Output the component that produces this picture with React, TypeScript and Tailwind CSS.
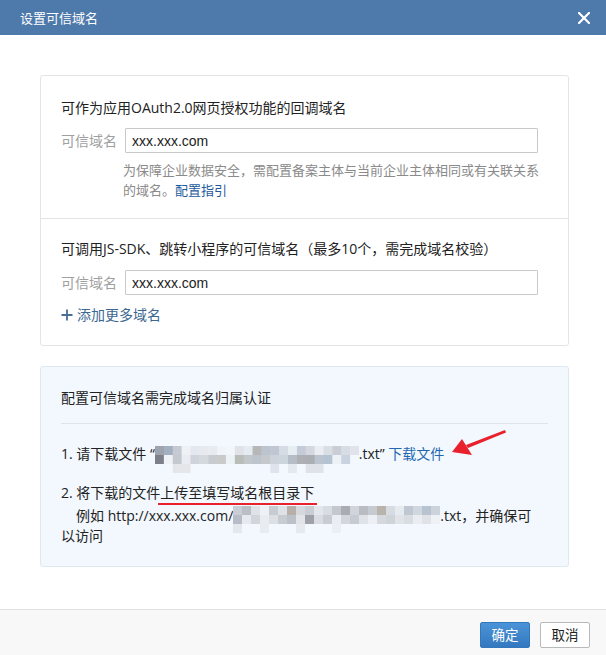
import React from "react";

const font = {
	fontFamily: '"Open Sans", "Noto Sans CJK SC", sans-serif',
};

const inputFont = {
	fontFamily: '"Liberation Sans", "Noto Sans CJK SC", sans-serif',
};

// pixelated (mosaic) patches that hide file names in the screenshot
const mosaicA: string[][] = [
	["#9ea3ad", "#a3b0bf", "#c5c9d1", "#eef2f7", "#e4e9ef", "#e6eaee", "#e8ecf0", "#f0f5fa", "#f2f7fc", "#dfe3e8", "#e5ebf0", "#b7b7ba", "#bcc4cf", "#c0c7d2", "#d6dce3", "#e6edf3", "#c3ccd8", "#d5d9df", "#eaeef2", "#d9dde4", "#cacdd4", "#d8dde3", "#e0e4ea"],
	["#7e8089", "#eff3f8", "#c4c8cf", "#e9edf2", "#cfd4da", "#d4d9de", "#c8ccd1", "#cacaca", "#edf2f7", "#babdb7", "#c2c7cc", "#bdc4cd", "#c6c9cb", "#ccd3db", "#ccd4dc", "#b7bdc6", "#aeb0b5", "#abaeb3", "#bcc4cf", "#b5c4d2", "#eef2f6", "#c8d3df", "#f2f8fe"],
	["#f2f8fe", "#f2f8fe", "#e4e6ea", "#e4e6ea", "#f2f8fe", "#f2f8fe", "#f2f8fe", "#f2f8fe", "#f2f8fe", "#f2f8fe", "#f2f8fe", "#f2f8fe", "#f2f8fe", "#dfe4ec", "#f2f8fe", "#e4e8ef", "#f2f8fe", "#dfe2e8", "#dfe2e8", "#f2f8fe", "#f2f8fe", "#f2f8fe", "#f2f8fe"],
];

const mosaicB: string[][] = [
	["#c9ced6", "#b9bec7", "#dfe3e8", "#eef2f6", "#c7ccd2", "#dde2e7", "#b8afa8", "#d5d9de", "#c9ced4", "#e3e7ec", "#d8dde3", "#c4c8ce", "#a9adb3", "#cfd5db", "#b9bdc2", "#c6cbd1", "#b8b3ab", "#d7dce2", "#e6ebf0", "#bfc8d2", "#d1d7de", "#b7c3d0", "#cdd3da"],
	["#b7bcc6", "#e6eaef", "#d2d6dc", "#e9edf1", "#dce0e5", "#c7ccd2", "#bcc1c7", "#e1e5ea", "#9ea2a8", "#d9dde3", "#c9cdd3", "#eaeef2", "#d3d7dc", "#c6cbd1", "#dfe3e8", "#ecf0f4", "#d5d9de", "#cfd4d9", "#e0e4e9", "#d8dde2", "#e9edf1", "#dfe3e8", "#eef2f6"],
	["#e4e8ed", "#f2f8fe", "#f2f8fe", "#e8ecf1", "#f2f8fe", "#f2f8fe", "#f2f8fe", "#e6e9ee", "#f2f8fe", "#f2f8fe", "#f2f8fe", "#ebeef2", "#f2f8fe", "#f2f8fe", "#f2f8fe", "#f2f8fe", "#f2f8fe", "#f2f8fe", "#f2f8fe", "#f2f8fe", "#f2f8fe", "#f2f8fe", "#f2f8fe"],
];

const Mosaic: React.FC<{ cells: string[][]; width: number; className?: string }> = ({
	cells,
	width,
	className,
}) => {
	const cols = cells[0].length;
	const w = width / cols;
	return (
		<svg
			width={width}
			height={cells.length * 9}
			className={className}
			viewBox={`0 0 ${width} ${cells.length * 9}`}
		>
			{cells.map((row, r) =>
				row.map((c, i) => (
					<rect key={`${r}-${i}`} x={i * w} y={r * 9} width={w + 0.5} height={9.5} fill={c} />
				))
			)}
		</svg>
	);
};

const DomainInput: React.FC<{ value: string }> = ({ value }) => (
	<div className="flex items-center">
		<span className="w-[64px] text-[14px] text-[#a0a0a0] leading-[20px]">可信域名</span>
		<input
			readOnly
			value={value}
			className="w-[413px] h-[25px] border border-[#c9c9c9] rounded-[1px] pl-[6px] text-[14px] text-[#222] outline-none bg-white"
			style={inputFont}
		/>
	</div>
);

export default function App() {
	return (
		<div className="relative w-[606px] h-[655px] flex flex-col bg-white text-[#222]" style={font}>
			{/* header */}
			<div className="h-[35px] bg-[#4d79ab] flex items-center justify-between pl-[20px] pr-[16px] shrink-0">
				<span className="text-white text-[13px] leading-[20px]">设置可信域名</span>
				<svg width="12" height="12" viewBox="0 0 12 12">
					<path d="M1 1 L11 11 M11 1 L1 11" stroke="#fff" strokeWidth="2.2" strokeLinecap="square" />
				</svg>
			</div>

			{/* body */}
			<div className="flex-1 pt-[40px] pl-[40px]">
				<div className="w-[529px] border border-[#e4e4e4] rounded-[3px]">
					<div className="pt-[22px] pb-[18px] px-[20px]">
						<div className="text-[14px] leading-[20px]">可作为应用OAuth2.0网页授权功能的回调域名</div>
						<div className="mt-[10px]">
							<DomainInput value="xxx.xxx.com" />
						</div>
						<p className="mt-[7px] ml-[62px] w-[420px] text-[13px] leading-[20px] text-[#8a8a8a]">
							为保障企业数据安全，需配置备案主体与当前企业主体相同或有关联关系的域名。
							<span className="text-[#1f5b9c]">配置指引</span>
						</p>
					</div>
					<div className="border-t border-[#e4e4e4] pt-[20px] pb-[20px] px-[20px]">
						<div className="text-[14px] leading-[20px]">
							可调用JS-SDK、跳转小程序的可信域名（最多10个，需完成域名校验）
						</div>
						<div className="mt-[11px]">
							<DomainInput value="xxx.xxx.com" />
						</div>
						<div className="mt-[10px] flex items-center gap-[4px] text-[14px] leading-[20px] text-[#3c6791]">
							<svg width="12" height="12" viewBox="0 0 12 12">
								<path d="M6 0.5 V11.5 M0.5 6 H11.5" stroke="#4a6d92" strokeWidth="1.8" />
							</svg>
							<span>添加更多域名</span>
						</div>
					</div>
				</div>

				<div className="mt-[20px] w-[529px] border border-[#dfe7ef] rounded-[3px] bg-[#f2f8fe] pt-[21px] pb-[20px] px-[20px]">
					<div className="text-[14px] leading-[20px]">配置可信域名需完成域名归属认证</div>
					<div className="mt-[15px] border-t border-[#dfe4ea]" />
					<div className="mt-[20px] h-[20px] text-[14px] leading-[20px] whitespace-nowrap">
						1. 请下载文件 “
						<Mosaic cells={mosaicA} width={204} className="inline-block align-top mt-[2px] -mb-[9px]" />
						.txt” <span className="text-[#1f68b0]">下载文件</span>
					</div>
					<div className="mt-[19px] text-[14px] leading-[20px]">
						<div>
							2. 将下载的文件
							<span className="relative">
								上传至填写域名根目录下
								<span className="absolute left-[-2px] right-[-3px] bottom-[-3px] h-[2px] bg-[#e8212c]" />
							</span>
						</div>
						<div className="mt-[3px] w-[476px] indent-[15px]">
							例如 http://xxx.xxx.com/
							<Mosaic cells={mosaicB} width={207} className="inline-block align-top -mb-[7px]" />
							.txt，并确保可以访问
						</div>
					</div>
				</div>
			</div>

			{/* footer */}
			<div className="h-[46px] shrink-0 border-t border-[#e2e2e2] bg-[#f8f8f8] flex items-start justify-end pt-[12px] pr-[16px] gap-[10px]">
				<button className="w-[50px] h-[26px] rounded-[2px] border border-[#3577bb] bg-gradient-to-b from-[#4b93d8] to-[#3479bf] text-white text-[13.5px]">
					确定
				</button>
				<button className="w-[50px] h-[26px] rounded-[2px] border border-[#b9b9b9] bg-white text-[#222] text-[13.5px]">
					取消
				</button>
			</div>

			{/* red annotation arrow */}
			<svg className="absolute left-[448px] top-[426px]" width="62" height="32" viewBox="0 0 62 32">
				<path d="M57 4 L58 6.5 L20 22 L18 19 Z" fill="#e8212c" />
				<path d="M4 26 L14 13 L24 29 Z" fill="#e8212c" />
			</svg>
		</div>
	);
}
